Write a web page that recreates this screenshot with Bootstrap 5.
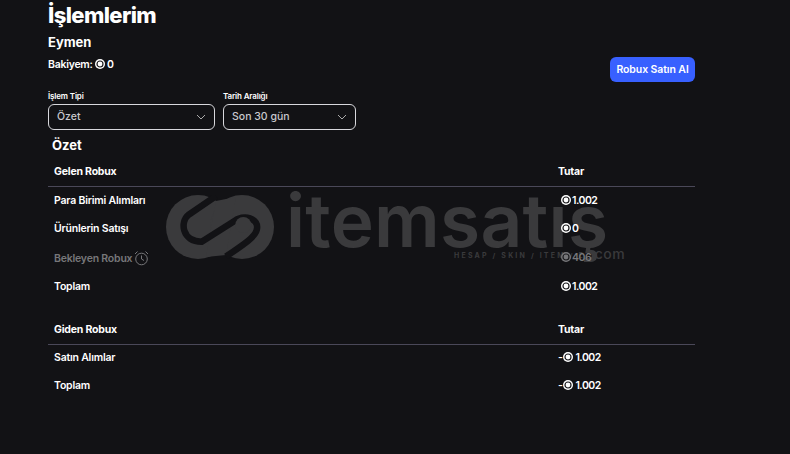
<!DOCTYPE html>
<html lang="tr"><head><meta charset="utf-8"><title>İşlemlerim</title>
<link rel="stylesheet" href="https://cdn.jsdelivr.net/npm/bootstrap@5.3.0/dist/css/bootstrap.min.css">
<style>
html,body{height:454px;overflow:hidden}
body{background:#121215;color:#fff;font-family:Inter,"Liberation Sans",sans-serif;position:relative}
.wm{position:absolute;left:166px;top:195px;width:470px;height:70px;color:#3a3a3c;pointer-events:none}
.wm-logo{position:absolute;left:0;top:0;width:108px;height:64px}
.wm-name{position:absolute;left:120px;top:-24px;font:600 73px/100px Inter,"Liberation Sans",sans-serif;letter-spacing:.25px;white-space:nowrap}
.wm-tag{position:absolute;left:288px;top:57px;font-size:7px;font-weight:700;letter-spacing:2.2px;line-height:8px;white-space:nowrap}
.wm-com{position:absolute;left:424px;top:50px;font-size:14px;font-weight:500;line-height:17px;letter-spacing:.5px}
.shell{position:relative;width:647px;margin-left:48px}
.ttl{font-size:22px;font-weight:800;line-height:29px;margin:0;padding-top:1px;letter-spacing:-.6px}
.who{font-size:13px;font-weight:700;line-height:16px;margin:4px 0 0}
.bal{font-size:10.5px;font-weight:600;line-height:14px;margin:0;padding-top:8px;letter-spacing:-.25px}
.buy{background:#3860ff;border:0;color:#fff;font-size:10.5px;font-weight:600;width:85px;height:25px;padding:0;border-radius:6px;white-space:nowrap;position:absolute;right:0;top:57px;letter-spacing:-.1px}
.filters{margin-top:19px;gap:8px}
.fl{font-size:8px;font-weight:600;line-height:10px;margin:0 0 3px;display:block;letter-spacing:-.15px}
.sel{height:26px;background-color:transparent;border:1px solid #d8d8dc;border-radius:6px;color:#c9c9ce;font-size:10.5px;font-weight:500;padding:0 8px;display:flex;align-items:center;justify-content:space-between}
.w1{width:167px}.w2{width:133px}
.sum{font-size:13px;font-weight:700;line-height:16px;margin:7px 0 0 4px}
.tb{width:647px;margin:0;--bs-table-bg:transparent;--bs-table-color:#fff;color:#fff;table-layout:fixed;font-size:10.5px;font-weight:600;letter-spacing:-.2px}
.tb th,.tb td{border:0;padding:0 0 0 6px;vertical-align:middle;background:transparent;color:#fff;box-shadow:none}
.tb th{font-weight:700;height:28px;border-bottom:1px solid #4a4858}
.tb th:first-child,.tb td:first-child{width:504px}
.tb td{height:28px}
.t1 td{padding-top:2px}
.tb .mut td{color:#77777a}
.tb .tall td{height:30px}
.t1{margin-top:5px}.t2{margin-top:16px}
.coin{width:10px;height:10px;vertical-align:-1px;margin:0 1px 0 0}
.bal .coin{margin:0 2px 0 0}
.tb td.amt{padding-left:9px;letter-spacing:-.5px}
.tb td.neg{padding-left:6px}
.neg .coin{margin-left:1px;margin-right:2px}
.clk{width:15px;height:16px;vertical-align:-4px;margin-left:2px}
</style></head>
<body>
<svg width="0" height="0" class="position-absolute"><defs>
<symbol id="c" viewBox="0 0 10 10"><circle cx="5" cy="5" r="5" fill="currentColor"/><circle cx="5" cy="5" r="3" fill="none" stroke="#1c1c1f" stroke-width="1.2"/><circle cx="5" cy="5" r="1.5" fill="currentColor"/></symbol>
</defs></svg>
<div class="wm">
<svg class="wm-logo" viewBox="0 0 108 64"><circle cx="32" cy="32" r="32" fill="#3a3a3c"/><circle cx="76" cy="32" r="32" fill="#3a3a3c"/><path fill="#3a3a3c" d="M50 6 70 2 60 60 40 62z"/><path fill="none" stroke="#121215" stroke-width="6.500" stroke-linecap="butt" stroke-linejoin="round" d="M50 1 22.300 20C14 26.700 15.700 46.700 35.700 46.700L67.300 26.700C77.300 18.300 94 23.300 90.700 35 89 41.700 80 48 60 61.500"/><circle cx="77.300" cy="30" r="8" fill="#3a3a3c"/></svg>
<div class="wm-name">itemsatış</div><div class="wm-tag">HESAP / SKIN / ITEM / E</div><div class="wm-com">.com</div>
</div>
<main class="shell">
<h1 class="ttl">İşlemlerim</h1>
<h2 class="who">Eymen</h2>
<p class="bal">Bakiyem: <svg class="coin"><use href="#c"/></svg>0</p>
<button class="btn buy" type="button">Robux Satın Al</button>
<div class="d-flex filters">
<div><label class="fl">İşlem Tipi</label><div class="sel w1"><span>Özet</span><svg width="10" height="6" viewBox="0 0 10 6"><path d="M1 1l4 4 4-4" fill="none" stroke="#aaa" stroke-width="1"/></svg></div></div>
<div><label class="fl">Tarih Aralığı</label><div class="sel w2"><span>Son 30 gün</span><svg width="10" height="6" viewBox="0 0 10 6"><path d="M1 1l4 4 4-4" fill="none" stroke="#aaa" stroke-width="1"/></svg></div></div>
</div>
<h3 class="sum">Özet</h3>
<table class="table tb t1">
<thead><tr><th>Gelen Robux</th><th>Tutar</th></tr></thead>
<tbody>
<tr><td>Para Birimi Alımları</td><td class="amt"><svg class="coin"><use href="#c"/></svg>1.002</td></tr>
<tr><td>Ürünlerin Satışı</td><td class="amt"><svg class="coin"><use href="#c"/></svg>0</td></tr>
<tr class="mut tall"><td>Bekleyen Robux<svg class="clk" viewBox="0 0 15 16"><circle cx="7.500" cy="9" r="5.800" fill="none" stroke="#77777a"/><path d="M7.500 5.500V9l2.500 1.500M1 4l2.500-2.500M14 4l-2.500-2.500" fill="none" stroke="#77777a"/></svg></td><td class="amt"><svg class="coin"><use href="#c"/></svg>406</td></tr>
<tr><td>Toplam</td><td class="amt"><svg class="coin"><use href="#c"/></svg>1.002</td></tr>
</tbody></table>
<table class="table tb t2">
<thead><tr><th>Giden Robux</th><th>Tutar</th></tr></thead>
<tbody>
<tr><td>Satın Alımlar</td><td class="amt neg">-<svg class="coin"><use href="#c"/></svg>1.002</td></tr>
<tr><td>Toplam</td><td class="amt neg">-<svg class="coin"><use href="#c"/></svg>1.002</td></tr>
</tbody></table>
</main>
</body></html>
